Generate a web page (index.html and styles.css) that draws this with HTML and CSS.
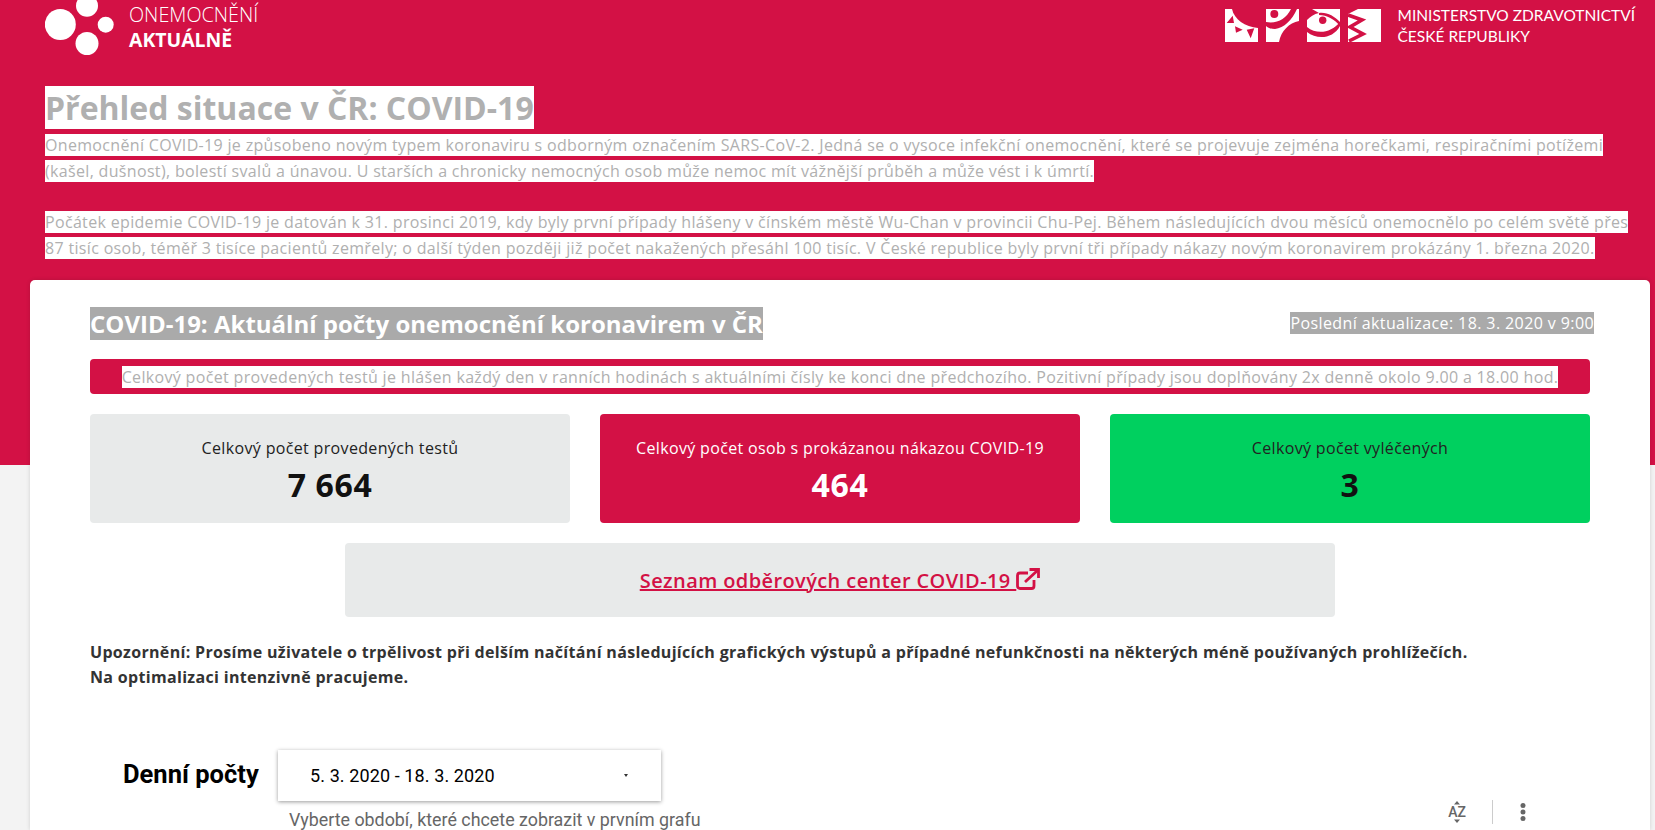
FILE: index.html
```html
<!DOCTYPE html>
<html lang="cs">
<head>
<meta charset="utf-8">
<title>Onemocnění aktuálně</title>
<link rel="stylesheet" href="styles.css">
</head>
<body>
<section class="hero">
  <header class="topbar">
    <div class="brand">
      <svg class="brand-mark" width="72" height="56" viewBox="0 0 72 56"><g fill="#fff"><circle cx="15.300" cy="24.500" r="15.500"/><circle cx="42" cy="5.700" r="11"/><circle cx="60.700" cy="24.700" r="8"/><circle cx="42" cy="43.500" r="11.500"/></g></svg>
      <div class="brand-text"><span class="brand-light">ONEMOCNĚNÍ</span><strong class="brand-bold">AKTUÁLNĚ</strong></div>
    </div>
    <div class="ministry">
      <svg class="ministry-mark" width="156" height="33" viewBox="0 0 156 33">
        <g fill="#fff"><rect x="0" width="33" height="33"/><rect x="41" width="33" height="33"/><rect x="82" width="33" height="33"/><rect x="123" width="33" height="33"/></g>
        <g fill="#d31145">
          <path d="M7 0C9 10 20 18 33 19V0Z"/>
          <path d="M1.700 14L7.700 6.700L9 14Z M10 17.300L17.700 20.700L11 23.700Z M21.700 20.700L29.300 19.300L25.700 29.300Z"/>
          <g transform="translate(41)">
            <circle cx="8.300" cy="5" r="4"/>
            <path d="M0 13C11 15 20 10 25 0H31C26 11 18 19 9 20C5 20 2 19 0 17Z"/>
            <path d="M13 33C15 22 23 14 33 12V33Z"/>
          </g>
          <g transform="translate(82)">
            <path d="M0 0H5L12 4C7 5 3 8 0 11Z"/>
            <path d="M12 4C20 3 27 7 33 13V17C27 10 20 6 12 6Z"/>
            <circle cx="15.700" cy="11.300" r="3.700"/>
            <path d="M0 18C10 26 24 24 33 13V17C26 30 10 31 0 23Z"/>
          </g>
          <g transform="translate(123)">
            <path d="M0 0H10L0 5Z"/>
            <path d="M0 6L14 11L2 18L15 25L1 32" fill="none" stroke="#d31145" stroke-width="3.600"/>
          </g>
        </g>
      </svg>
      <div class="ministry-text"><span>MINISTERSTVO ZDRAVOTNICTVÍ</span><span>ČESKÉ REPUBLIKY</span></div>
    </div>
  </header>
  <div class="intro">
    <h1 class="hero-title"><span class="mark-white">Přehled situace v ČR: COVID-19</span></h1>
    <p class="hero-copy"><span class="mark-white">Onemocnění COVID-19 je způsobeno novým typem koronaviru s odborným označením SARS-CoV-2. Jedná se o vysoce infekční onemocnění, které se projevuje zejména horečkami, respiračními potížemi<br>(kašel, dušnost), bolestí svalů a únavou. U starších a chronicky nemocných osob může nemoc mít vážnější průběh a může vést i k úmrtí.</span><br><br><span class="mark-white">Počátek epidemie COVID-19 je datován k 31. prosinci 2019, kdy byly první případy hlášeny v čínském městě Wu-Chan v provincii Chu-Pej. Během následujících dvou měsíců onemocnělo po celém světě přes<br>87 tisíc osob, téměř 3 tisíce pacientů zemřely; o další týden později již počet nakažených přesáhl 100 tisíc. V České republice byly první tři případy nákazy novým koronavirem prokázány 1. března 2020.</span></p>
  </div>
</section>
<main class="card">
  <div class="card-head">
    <h2 class="card-title"><span class="mark-grey">COVID-19: Aktuální počty onemocnění koronavirem v ČR</span></h2>
    <p class="updated"><span class="mark-grey">Poslední aktualizace: 18. 3. 2020 v 9:00</span></p>
  </div>
  <p class="notice"><span class="mark-white">Celkový počet provedených testů je hlášen každý den v ranních hodinách s aktuálními čísly ke konci dne předchozího. Pozitivní případy jsou doplňovány 2x denně okolo 9.00 a 18.00 hod.</span></p>
  <div class="stats">
    <div class="stat stat-grey"><span class="stat-label">Celkový počet provedených testů</span><strong class="stat-value">7 664</strong></div>
    <div class="stat stat-red"><span class="stat-label">Celkový počet osob s prokázanou nákazou COVID-19</span><strong class="stat-value">464</strong></div>
    <div class="stat stat-green"><span class="stat-label">Celkový počet vyléčených</span><strong class="stat-value">3</strong></div>
  </div>
  <div class="centers"><a class="centers-link" href="#">Seznam odběrových center COVID-19 <svg class="ext" width="24" height="22" viewBox="0 0 24 22" fill="none" stroke="#d31145" stroke-width="2.800"><path d="M18 12V18C18 19.500 17.200 20.500 15.500 20.500H4C2.500 20.500 1.500 19.500 1.500 18V7.500C1.500 6 2.500 5 4 5H12"/><path d="M9 14L22 2"/><path d="M13.500 1.500H22.500V10"/></svg></a></div>
  <p class="warning">Upozornění: Prosíme uživatele o trpělivost při delším načítání následujících grafických výstupů a případné nefunkčnosti na některých méně používaných prohlížečích.<br>Na optimalizaci intenzivně pracujeme.</p>
  <div class="filter">
    <h3 class="filter-title">Denní počty</h3>
    <div class="filter-field">
      <div class="select"><span>5. 3. 2020 - 18. 3. 2020</span><span class="caret"></span></div>
      <p class="hint">Vyberte období, které chcete zobrazit v prvním grafu</p>
    </div>
    <div class="tools">
      <svg class="az" width="24" height="24" viewBox="0 0 24 24" fill="#666"><path d="M12 1L15 4.500H9Z M12 23L9 19.500H15Z"/><text x="12" y="17" text-anchor="middle" class="az-text">AZ</text></svg>
      <span class="tool-sep"></span>
      <svg width="8" height="22" viewBox="0 0 8 22" fill="#666"><circle cx="4" cy="4.500" r="2.500"/><circle cx="4" cy="11" r="2.500"/><circle cx="4" cy="17.500" r="2.500"/></svg>
    </div>
  </div>
</main>
</body>
</html>
```
FILE: styles.css
```css
* { box-sizing: border-box; }
html, body { margin: 0; height: 830px; overflow: hidden; }
body { background: #f3f3f3; font-family: "Open Sans", sans-serif; color: #333; }
h1, h2, h3, p { margin: 0; font-weight: inherit; }

.hero { background: #d31145; height: 465px; padding: 0 5px 0 45px; }
.topbar { display: flex; justify-content: space-between; height: 83px; }
.brand { display: flex; gap: 12px; height: 60px; }
.brand-mark { display: block; }
.brand-text { display: flex; flex-direction: column; color: #fff; line-height: 25px; padding-top: 2px; }
.brand-light { font-weight: 300; font-size: 19.800px; }
.brand-bold { font-weight: 700; font-size: 19.400px; }
.ministry { display: flex; gap: 17px; padding: 9px 15px 0 0; height: 60px; }
.ministry-text { display: flex; flex-direction: column; color: #fff; font-family: Lato, sans-serif; font-size: 15.500px; line-height: 21px; margin-top: -4px; }

.mark-white { background: #fff; color: #b0b0b0; }
.mark-grey { background: #aaa; color: #fff; }
.hero-title { font-size: 32px; line-height: 50px; font-weight: 700; }
.hero-copy { font-size: 16px; line-height: 25.800px; letter-spacing: .33px; white-space: nowrap; }

.card { background: #fff; width: 1620px; height: 550px; margin: -185px 0 0 30px; padding: 24px 60px 0; border-radius: 5px 5px 0 0; box-shadow: 0 0 4px rgba(0, 0, 0, .15); }
.card-head { display: flex; justify-content: space-between; align-items: flex-start; height: 44px; }
.card-title { font-size: 24px; font-weight: 700; line-height: 40px; }
.updated { font-size: 16px; line-height: 38px; letter-spacing: .4px; margin-right: -4px; }
.notice { background: #d31145; border-radius: 4px; height: 35px; margin-top: 11px; font-size: 16px; line-height: 37px; letter-spacing: .33px; text-align: center; }

.stats { display: grid; grid-template-columns: repeat(3, 480px); gap: 30px; margin-top: 20px; }
.stat { height: 109px; border-radius: 4px; display: flex; flex-direction: column; align-items: center; padding-top: 22px; }
.stat-grey { background: #e8eaea; color: #222; }
.stat-red { background: #d31145; color: #fff; }
.stat-green { background: #00d05f; color: #222; }
.stat-label { font-size: 16px; line-height: 24px; letter-spacing: .34px; }
.stat-value { font-size: 32px; line-height: 44px; font-weight: 700; letter-spacing: .64px; color: #111; margin-top: 3px; }
.stat-red .stat-value { color: #fff; }

.centers { width: 990px; height: 74px; margin: 20px 0 0 255px; background: #e8eaea; border-radius: 4px; display: flex; align-items: center; justify-content: center; }
.centers-link { color: #d31145; font-size: 20px; font-weight: 600; letter-spacing: .4px; }
.ext { vertical-align: -2px; }

.warning { font-size: 16px; font-weight: 700; line-height: 25px; letter-spacing: .32px; margin-top: 23px; color: #333; }

.filter { display: flex; margin-top: 60px; }
.filter-title { font-family: Roboto, sans-serif; font-size: 25.500px; font-weight: 700; color: #000; margin-left: 33px; width: 155px; line-height: 49px; white-space: nowrap; }
.filter-field { width: 383px; }
.select { height: 51px; background: #fff; box-shadow: 0 1px 4px rgba(0, 0, 0, .4); display: flex; align-items: center; justify-content: space-between; padding: 0 33px 0 32px; font-family: Roboto, sans-serif; font-size: 18px; letter-spacing: .1px; color: #000; }
.caret { width: 0; height: 0; border: 2px solid transparent; border-top: 3px solid #333; border-bottom: 0; }
.hint { font-family: Roboto, sans-serif; font-size: 17.850px; color: #666; padding: 8px 0 0 11px; white-space: nowrap; }
.tools { margin: 47px 63px 0 auto; display: flex; align-items: center; gap: 23px; height: 30px; align-self: flex-start; }
.az-text { font-family: Roboto, sans-serif; font-size: 14px; font-weight: 500; }
.tool-sep { width: 1px; height: 24px; background: #ccc; margin-right: 3px; }
```
